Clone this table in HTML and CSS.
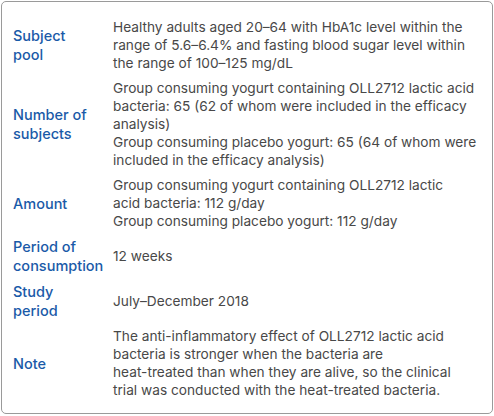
FILE: index.html
```html
<!DOCTYPE html>
<html>
<head>
<meta charset="utf-8">
<link rel="stylesheet" href="styles.css">
</head>
<body>
<div class="box">
  <div class="label">Subject<br>pool</div>
  <div class="value">Healthy adults aged 20–64 with HbA1c level within the<br>range of 5.6–6.4% and fasting blood sugar level within<br>the range of 100–125 mg/dL</div>

  <div class="label">Number of<br>subjects</div>
  <div class="value">Group consuming yogurt containing OLL2712 lactic acid<br>bacteria: 65 (62 of whom were included in the efficacy<br>analysis)<br>Group consuming placebo yogurt: 65 (64 of whom were<br>included in the efficacy analysis)</div>

  <div class="label">Amount</div>
  <div class="value">Group consuming yogurt containing OLL2712 lactic<br>acid bacteria: 112 g/day<br>Group consuming placebo yogurt: 112 g/day</div>

  <div class="label">Period of<br>consumption</div>
  <div class="value">12 weeks</div>

  <div class="label">Study<br>period</div>
  <div class="value">July–December 2018</div>

  <div class="label">Note</div>
  <div class="value">The anti-inflammatory effect of OLL2712 lactic acid<br>bacteria is stronger when the bacteria are<br>heat-treated than when they are alive, so the clinical<br>trial was conducted with the heat-treated bacteria.</div>
</div>
</body>
</html>
```
FILE: styles.css
```css
html, body {
  margin: 0;
  padding: 0;
  background: #fff;
}
body {
  font-family: Inter, "Noto Sans", sans-serif;
}
.box {
  margin: 1px;
  width: 492px;
  height: 413px;
  box-sizing: border-box;
  border: 1px solid #9a9a9a;
  border-radius: 5px;
  padding: 16px 6px 0 11px;
  display: grid;
  grid-template-columns: 100px 1fr;
  row-gap: 7px;
  align-items: center;
  align-content: start;
}
.label {
  color: #1a5aa8;
  font-size: 14.5px;
  line-height: 19px;
  font-weight: 500;
  white-space: nowrap;
}
.value {
  color: #484848;
  font-size: 13.7px;
  line-height: 18px;
  white-space: nowrap;
}
```
